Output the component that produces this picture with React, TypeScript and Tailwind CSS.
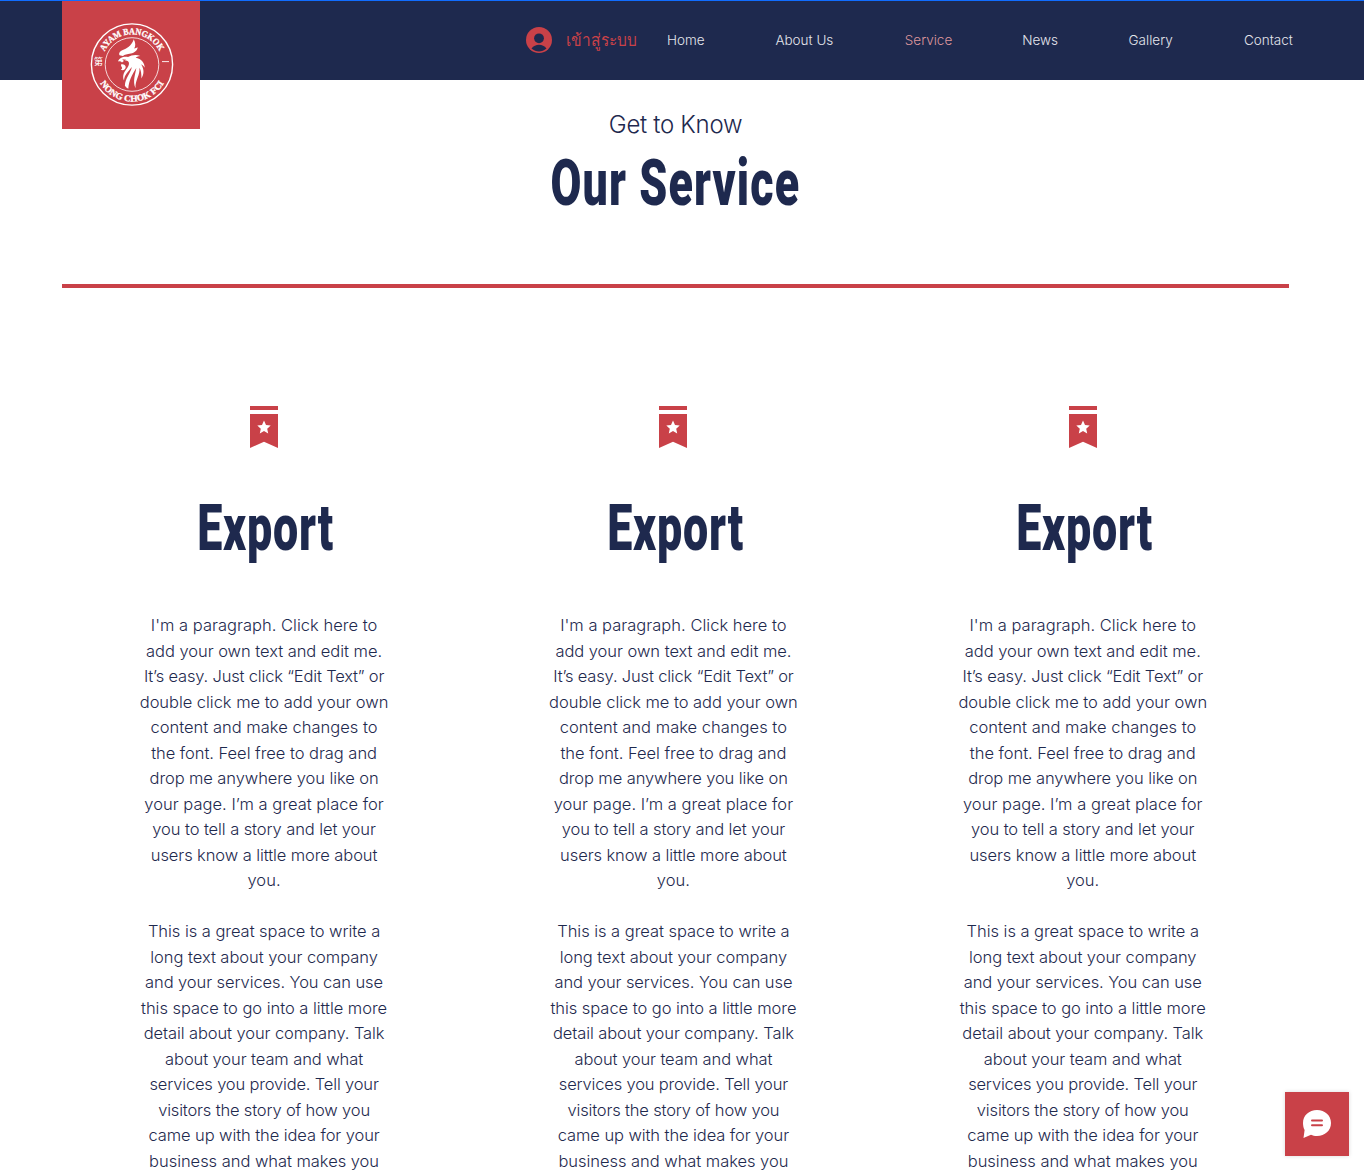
const NAV = [
  { label: 'Home', width: 'w-[38px]' },
  { label: 'About Us', width: 'w-[59px]' },
  { label: 'Service', width: 'w-[47px]', active: true },
  { label: 'News', width: 'w-[36px]' },
  { label: 'Gallery', width: 'w-[45px]' },
  { label: 'Contact', width: 'w-[50px]' },
];

const WIDE = 'tracking-[0.02px]';
const NORMAL = 'tracking-[-0.04px]';
const SNUG = 'tracking-[-0.09px]';
const TIGHT = 'tracking-[-0.17px]';

const FIRST = [
  ["I'm a paragraph. Click here to", WIDE],
  ['add your own text and edit me.', NORMAL],
  ['It’s easy. Just click “Edit Text” or', TIGHT],
  ['double click me to add your own', NORMAL],
  ['content and make changes to', WIDE],
  ['the font. Feel free to drag and', NORMAL],
  ['drop me anywhere you like on', SNUG],
  ['your page. I’m a great place for', WIDE],
  ['you to tell a story and let your', SNUG],
  ['users know a little more about', SNUG],
  ['you.', WIDE],
];

const SECOND = [
  ['This is a great space to write a', NORMAL],
  ['long text about your company', NORMAL],
  ['and your services. You can use', SNUG],
  ['this space to go into a little more', NORMAL],
  ['detail about your company. Talk', SNUG],
  ['about your team and what', SNUG],
  ['services you provide. Tell your', TIGHT],
  ['visitors the story of how you', TIGHT],
  ['came up with the idea for your', SNUG],
  ['business and what makes you', NORMAL],
];

function Logo() {
  return (
    <svg viewBox="0 0 138 128" className="block h-32 w-[138px]" fill="none">
      <defs>
        <path id="arcTop" d="M39.8 63.5 A30.2 30.2 0 0 1 100.2 63.5" />
        <path id="arcBottom" d="M33 63.5 A37 37 0 0 0 107 63.5" />
      </defs>
      <circle cx="70" cy="63.5" r="40.6" stroke="#fff" strokeWidth="1.4" />
      <circle cx="70" cy="63.5" r="26.8" stroke="#fff" strokeWidth="0.8" />
      <g
        fill="#fff"
        stroke="#fff"
        strokeWidth="0.3"
        fontFamily='"Liberation Serif", serif'
        fontWeight="700"
        fontSize="9"
        textAnchor="middle"
      >
        <text textLength="68" lengthAdjust="spacingAndGlyphs">
          <textPath href="#arcTop" startOffset="50%">AYAM BANGKOK</textPath>
        </text>
        <text textLength="77" lengthAdjust="spacingAndGlyphs">
          <textPath href="#arcBottom" startOffset="50%">NONG CHOK FCI</textPath>
        </text>
      </g>
      <text x="36.4" y="64.3" fill="#fff" stroke="#fff" strokeWidth="0.1" fontFamily='"Noto Sans CJK TC", sans-serif' fontSize="9" textAnchor="middle">第</text>
      <path d="M100 60.6h7" stroke="#fff" strokeWidth="0.9" />
      <g fill="#fff">
        <path d="M57.5 54.2C56.3 51.6 58.5 49.6 62 48.4C66.500 46.800 70.500 43 71.700 38.300C73.600 41.800 73.800 45 72.200 47.600C73.600 47.300 74.600 46.900 75.600 46.200C75.500 49.500 72.500 51.700 68.800 52.500C65 53.300 62.500 53.500 61 55Z" />
        <path d="M56 60.500C57 57.500 61 55.300 66 56C69.500 54 74.500 53.300 78.300 55C75.500 55.300 74.300 56 73.700 56.700C79.300 57.600 82.700 61.700 82.700 66.800C81.300 64.600 80.300 63.900 79.200 63.600C82.400 68.500 82.100 73.300 79.400 77.500C79.500 72.500 79 69.500 77.400 66.800C78.400 74 73 79 73.500 87.300C70.300 80 73.500 73 74.300 67C70 74 66.700 80 66.300 87.700C64.800 87 63.700 86 62.900 84.800C63 77 69 71.800 69.800 66C66 71 62.500 73.500 62 79.500C59.700 74.500 62.700 70.300 65.200 67C67.200 64.200 67.700 61.800 66 60.300C64 58.600 61.700 60 60 61.400C59.200 60.300 57.700 60 56 60.500Z" />
        <path d="M59.200 63.200C62 63 64.200 64.300 63.600 66.800C63 69 60.800 69.800 58.800 68.600C60.300 67.900 60.300 67 59.800 66.200C59.200 65.200 58.800 64.300 59.200 63.200Z" />
      </g>
      <path d="M60.2 58.2l4 .6-2 1.400z" fill="#c94148" />
    </svg>
  );
}

function Ribbon() {
  return (
    <svg viewBox="0 0 28 42" className="block h-[42px] w-7">
      <path d="M0 0h28v4H0zM0 8h28v34l-14-6.300L0 42z" fill="#c94148" />
      <path d="M14 14.600l2 4.400 4.700.500-3.500 3.200 1 4.700-4.200-2.400-4.200 2.400 1-4.700-3.500-3.200 4.700-.500z" fill="#fff" />
    </svg>
  );
}

function Service() {
  return (
    <article className="flex w-[409.35px] shrink-0 flex-col items-center">
      <Ribbon />
      <h2 className="mt-[43px] ml-[4px] h-[76px] origin-center scale-x-[0.7] font-[Roboto] text-[64px] leading-[76px] font-black tracking-[1.1px] whitespace-nowrap">
        Export
      </h2>
      <div className="mt-[46px] text-center text-[16.5px] leading-[25.5px] font-light whitespace-nowrap">
        {FIRST.map(([line, tracking]) => (
          <p key={line} className={tracking}>{line}</p>
        ))}
        <p className="h-[25.5px]" />
        {SECOND.map(([line, tracking]) => (
          <p key={line} className={tracking}>{line}</p>
        ))}
      </div>
    </article>
  );
}

export default function App() {
  return (
    <div className="relative h-[1170px] w-[1364px] overflow-hidden bg-white font-[Inter,sans-serif] text-[#1e294e]">
      <header className="flex h-20 items-start border-t border-[#116dff] bg-[#1e294e]">
        <div className="ml-[62px] h-32 w-[138px] shrink-0 bg-[#c94148]">
          <Logo />
        </div>
        <button className="mt-[26px] ml-[326px] flex h-[26px] w-[111px] shrink-0 items-center gap-[14px] text-[#c94148]">
          <svg viewBox="0 0 26 26" className="h-[26px] w-[26px] shrink-0">
            <circle cx="13" cy="13" r="13" fill="#c94148" />
            <circle cx="13" cy="11.300" r="4.900" fill="#1e294e" />
            <path d="M5.500 21.500C7.500 18.800 10 17.700 13 17.700s5.500 1.100 7.500 3.800c-4.500 4-10.500 4-15 0z" fill="#1e294e" />
          </svg>
          <span className="origin-left scale-x-[0.91] text-[17px] leading-[26px] whitespace-nowrap">เข้าสู่ระบบ</span>
        </button>
        <nav className="mt-[29px] ml-[30px] flex w-[627px] justify-between text-[13.5px] leading-5 font-light whitespace-nowrap text-[#e4e5ec]">
          {NAV.map((item) => (
            <a key={item.label} className={`${item.width} ${item.active ? 'text-[#dd969c]' : ''}`}>
              {item.label}
            </a>
          ))}
        </nav>
      </header>
      <main>
        <section className="mx-[62px] flex h-[208px] w-[1227px] flex-col items-center border-b-4 border-[#c94148] pt-[27px]">
          <p className="text-[24px] leading-9 font-light tracking-[-0.3px] whitespace-nowrap">Get to Know</p>
          <h1 className="mt-[3px] h-[76px] scale-x-[0.7] font-[Roboto] text-[64px] leading-[76px] font-black tracking-[1.6px] whitespace-nowrap">
            Our Service
          </h1>
        </section>
        <section className="ml-[59.4px] flex pt-[118px]">
          <Service />
          <Service />
          <Service />
        </section>
      </main>
      <button className="absolute top-[1092px] left-[1285px] flex h-16 w-16 items-center justify-center bg-[#c94148] shadow-[0_0_4px_rgba(0,0,0,0.15)]">
        <svg viewBox="0 0 28 28" className="h-7 w-7">
          <path d="M14 0C22 0 28 5.500 28 13s-6 13-14 13c-2.500 0-4.200-.400-6-1.200L.500 28 1.600 20C.500 18 0 15.500 0 13 0 5.500 6 0 14 0z" fill="#fff" />
          <path d="M9 10.500h10M9 15.200h10" stroke="#c94148" strokeWidth="2" strokeLinecap="round" />
        </svg>
      </button>
    </div>
  );
}
